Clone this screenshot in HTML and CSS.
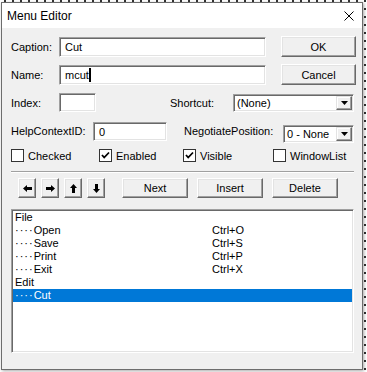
FILE: index.html
```html
<!DOCTYPE html>
<html lang="en">

<head>
    <meta charset="UTF-8">
    <meta name="viewport" content="width=device-width, initial-scale=1.0">
    <title>Menu Editor</title>
    <link rel="stylesheet" href="styles.css">
</head>

<body>
<div class="window">
    <div class="titlebar">
        <span class="title">Menu Editor</span>
        <svg class="close" width="10" height="10" viewBox="0 0 10 10">
            <path d="M0.5 0.5 L9.5 9.5 M9.5 0.5 L0.5 9.5" stroke="#000" stroke-width="1" fill="none"/>
        </svg>
    </div>

    <div class="dialog-body">
        <div class="top">
            <div class="fields">
                <div class="row">
                    <span class="lbl lbl-short">Caption:</span>
                    <div class="textbox tb-wide">Cut</div>
                </div>
                <div class="row">
                    <span class="lbl lbl-short">Name:</span>
                    <div class="textbox tb-wide">mcut<span class="caret"></span></div>
                </div>
            </div>
            <div class="side-buttons">
                <button class="btn btn-side">OK</button>
                <button class="btn btn-side">Cancel</button>
            </div>
        </div>

        <div class="row row-index">
            <span class="lbl lbl-short">Index:</span>
            <div class="textbox tb-index"></div>
            <span class="lbl lbl-shortcut">Shortcut:</span>
            <div class="combo combo-shortcut">
                <span class="combo-text">(None)</span>
                <span class="combo-btn">
                    <svg width="7" height="4" viewBox="0 0 7 4"><polygon points="0,0 7,0 3.5,4" fill="#000"/></svg>
                </span>
            </div>
        </div>

        <div class="row row-help">
            <span class="lbl lbl-help">HelpContextID:</span>
            <div class="textbox tb-help">0</div>
            <span class="lbl lbl-nego">NegotiatePosition:</span>
            <div class="combo combo-nego">
                <span class="combo-text">0 - None</span>
                <span class="combo-btn">
                    <svg width="7" height="4" viewBox="0 0 7 4"><polygon points="0,0 7,0 3.5,4" fill="#000"/></svg>
                </span>
            </div>
        </div>

        <div class="checks">
            <label class="chk chk-1"><span class="box"></span>Checked</label>
            <label class="chk chk-2"><span class="box"><svg width="11" height="11" viewBox="0 0 11 11"><path d="M2 5 L4.2 7.5 L9 2.5" stroke="#000" stroke-width="1.8" fill="none"/></svg></span>Enabled</label>
            <label class="chk chk-3"><span class="box"><svg width="11" height="11" viewBox="0 0 11 11"><path d="M2 5 L4.2 7.5 L9 2.5" stroke="#000" stroke-width="1.8" fill="none"/></svg></span>Visible</label>
            <label class="chk"><span class="box"></span>WindowList</label>
        </div>

        <div class="separator"></div>

        <div class="toolbar">
            <button class="btn btn-arrow">
                <svg width="9" height="7" viewBox="0 0 9 7"><path d="M0 3.5 L4 0 V2 H9 V5 H4 V7 Z" fill="#000"/></svg>
            </button>
            <button class="btn btn-arrow">
                <svg width="9" height="7" viewBox="0 0 9 7"><path d="M9 3.5 L5 0 V2 H0 V5 H5 V7 Z" fill="#000"/></svg>
            </button>
            <button class="btn btn-arrow">
                <svg width="7" height="9" viewBox="0 0 7 9"><path d="M3.5 0 L0 4 H2 V9 H5 V4 H7 Z" fill="#000"/></svg>
            </button>
            <button class="btn btn-arrow">
                <svg width="7" height="9" viewBox="0 0 7 9"><path d="M3.5 9 L0 5 H2 V0 H5 V5 H7 Z" fill="#000"/></svg>
            </button>
            <button class="btn btn-wide btn-next">Next</button>
            <button class="btn btn-wide">Insert</button>
            <button class="btn btn-wide">Delete</button>
        </div>

        <div class="menu-list">
            <div class="item"><span>File</span><span></span></div>
            <div class="item"><span><span class="dots">····</span>Open</span><span>Ctrl+O</span></div>
            <div class="item"><span><span class="dots">····</span>Save</span><span>Ctrl+S</span></div>
            <div class="item"><span><span class="dots">····</span>Print</span><span>Ctrl+P</span></div>
            <div class="item"><span><span class="dots">····</span>Exit</span><span>Ctrl+X</span></div>
            <div class="item"><span>Edit</span><span></span></div>
            <div class="item selected"><span><span class="dots">····</span>Cut</span><span></span></div>
        </div>
    </div>
</div>
</body>

</html>
```

FILE: styles.css
```css
/* Menu Editor dialog */
body {
    margin: 0;
    width: 367px;
    height: 372px;
    overflow: hidden;
    font-family: "Liberation Sans", Arial, sans-serif;
    font-size: 11px;
    color: #000;
    background-color: #fff;
    background-image: radial-gradient(circle, #333 0.8px, transparent 1.1px);
    background-size: 8px 8px;
    background-position: 1px -3px;
}

.window {
    margin: 2px 0 0 1px;
    width: 360px;
    height: 366px;
    border: 1px solid #6d6d6d;
    background-color: #f0f0f0;
    box-shadow: 1px 1px 3px rgba(0, 0, 0, 0.35);
}

.titlebar {
    height: 25px;
    background-color: #fff;
    display: flex;
    align-items: center;
    justify-content: space-between;
    padding: 0 8px 0 5px;
}

.title {
    font-size: 12px;
}

.dialog-body {
    padding: 8px 8px 0 9px;
}

/* top area: caption / name + OK / Cancel */
.top {
    display: flex;
    gap: 15px;
}

.fields {
    width: 255px;
    flex-shrink: 0;
    display: flex;
    flex-direction: column;
    gap: 7px;
}

.row {
    display: flex;
    align-items: center;
    height: 21px;
}

.lbl {
    flex-shrink: 0;
    white-space: nowrap;
}

.lbl-short {
    width: 48px;
}

.side-buttons {
    width: 75px;
    flex-shrink: 0;
    display: flex;
    flex-direction: column;
    gap: 7px;
}

/* sunken fields */
.textbox {
    box-sizing: border-box;
    height: 20px;
    background: #fff;
    border: 1px solid;
    border-color: #a0a0a0 #fff #fff #a0a0a0;
    box-shadow: inset 1px 1px #696969, inset -1px -1px #e3e3e3;
    padding-left: 5px;
    display: flex;
    align-items: center;
    flex-shrink: 0;
}

.tb-wide {
    width: 207px;
    margin-top: 1px;
}

.caret {
    display: inline-block;
    width: 2px;
    height: 14px;
    background: #000;
}

.row-index {
    margin-top: 8px;
    height: 19px;
}

.tb-index {
    width: 37px;
    height: 19px;
}

.lbl-shortcut {
    margin-left: 74px;
    width: 63px;
}

.combo {
    box-sizing: border-box;
    height: 18px;
    background: #fff;
    border: 1px solid;
    border-color: #a0a0a0 #fff #fff #a0a0a0;
    box-shadow: inset 1px 1px #696969, inset -1px -1px #e3e3e3;
    display: flex;
    align-items: center;
    justify-content: space-between;
    padding: 1px;
    flex-shrink: 0;
}

.combo-text {
    padding-left: 2px;
}

.combo-btn {
    box-sizing: border-box;
    width: 16px;
    height: 14px;
    background: #f0f0f0;
    border: 1px solid;
    border-color: #e3e3e3 #696969 #696969 #e3e3e3;
    box-shadow: inset -1px -1px #a0a0a0, inset 1px 1px #fff;
    display: flex;
    align-items: center;
    justify-content: center;
}

.combo-shortcut {
    width: 121px;
    margin-top: 1px;
    align-self: flex-start;
}

.row-help {
    margin-top: 10px;
    height: 21px;
    align-items: flex-start;
}

.lbl-help {
    width: 82px;
    line-height: 19px;
}

.tb-help {
    width: 74px;
    height: 19px;
}

.lbl-nego {
    margin-left: 17px;
    width: 99px;
    line-height: 19px;
}

.combo-nego {
    width: 71px;
    margin-top: 3px;
}

/* checkboxes */
.checks {
    margin-top: 6px;
    height: 13px;
    display: flex;
    align-items: center;
}

.chk {
    display: flex;
    align-items: center;
    gap: 4px;
    flex-shrink: 0;
}

.chk-1 {
    width: 88px;
}

.chk-2 {
    width: 84px;
}

.chk-3 {
    width: 90px;
}

.box {
    width: 11px;
    height: 11px;
    border: 1px solid #333;
    background: #fff;
    display: flex;
}

.separator {
    margin-top: 9px;
    border-top: 1px solid #a0a0a0;
    border-bottom: 1px solid #fff;
}

/* buttons */
.btn {
    box-sizing: border-box;
    font-family: inherit;
    font-size: 11px;
    color: #000;
    padding: 0;
    margin: 0;
    background: #f0f0f0;
    border: 1px solid;
    border-color: #fff #696969 #696969 #fff;
    box-shadow: inset -1px -1px #a0a0a0, inset 1px 1px #e3e3e3;
    display: flex;
    align-items: center;
    justify-content: center;
}

.btn-side {
    height: 21px;
    width: 75px;
}

.toolbar {
    margin-top: 5px;
    height: 20px;
    display: flex;
    padding-left: 7px;
}

.btn-arrow {
    width: 18px;
    height: 20px;
    margin-right: 5px;
}

.btn-arrow:nth-child(4) {
    margin-right: 17px;
}

.btn-wide {
    width: 66px;
    height: 20px;
    margin-right: 9px;
}

/* menu list */
.menu-list {
    box-sizing: border-box;
    margin-top: 11px;
    width: 343px;
    height: 144px;
    background: #fff;
    border: 1px solid;
    border-color: #a0a0a0 #fff #fff #a0a0a0;
    box-shadow: inset 1px 1px #696969, inset -1px -1px #e3e3e3;
    padding: 1px;
}

.item {
    display: grid;
    grid-template-columns: 197px 1fr;
    height: 13px;
    line-height: 13px;
    padding-left: 2px;
    white-space: nowrap;
}

.item.selected {
    background: #0078d7;
    color: #fff;
}

.dots {
    letter-spacing: 1px;
}
```
